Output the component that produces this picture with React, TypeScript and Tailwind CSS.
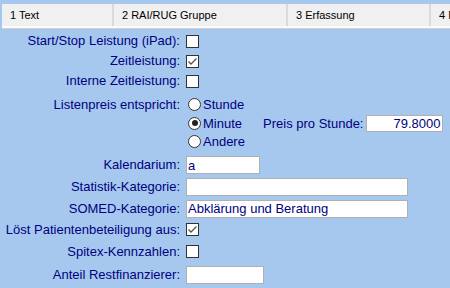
import React from "react";

type RowProps = {
  label?: string;
  h: string;
  children?: React.ReactNode;
};

function Row({ label, h, children }: RowProps) {
  return (
    <div className={`flex items-center ${h}`}>
      <div className="w-[181px] shrink-0 text-right pr-px">{label ? label + ":" : ""}</div>
      <div className="flex items-center pl-[5px]">{children}</div>
    </div>
  );
}

function Check({ checked }: { checked?: boolean }) {
  return (
    <span className="w-[13px] h-[13px] border border-[#333] bg-white flex items-center justify-center">
      {checked && (
        <svg width="11" height="11" viewBox="0 0 11 11">
          <path d="M1.5 5.5 L4 8 L9.5 2.5" fill="none" stroke="#555" strokeWidth="1.3" />
        </svg>
      )}
    </span>
  );
}

function Radio({ label, checked }: { label: string; checked?: boolean }) {
  return (
    <div className="flex items-center h-[17.5px] pl-[4px]">
      <span className="w-[13px] h-[13px] rounded-full border border-[#333] bg-white flex items-center justify-center">
        {checked && <span className="w-[6px] h-[6px] rounded-full bg-[#222]" />}
      </span>
      <span className="ml-[2px]">{label}</span>
    </div>
  );
}

function Field({ w, value, right }: { w: string; value?: string; right?: boolean }) {
  return (
    <div
      className={`${w} h-[18px] bg-white border border-[#b0b0b0] flex items-center px-px leading-none text-[#000080] ${
        right ? "justify-end pr-[3px]" : ""
      }`}
    >
      {value}
    </div>
  );
}

export default function App() {
  const tabs = [
    { label: "1 Text", w: "w-[112px]" },
    { label: "2 RAI/RUG Gruppe", w: "w-[174px]" },
    { label: "3 Erfassung", w: "w-[143px]" },
    { label: "4 Nachweis", w: "w-[60px]" },
  ];

  return (
    <div className="w-[450px] h-[288px] overflow-hidden bg-[#a6c8ee] text-[13px] text-[#000080] font-['Liberation_Sans',Arial,sans-serif]">
      {/* tabs */}
      <div className="pt-1 pl-[2px]">
        <div className="flex h-[22px] bg-[#f0f0f0] overflow-hidden text-[11px] text-black">
          {tabs.map((t) => (
            <div key={t.label} className={`${t.w} shrink-0 flex items-center pl-[8px] border-r-2 border-[#dadada] whitespace-nowrap`}>
              {t.label}
            </div>
          ))}
        </div>
        <div className="h-[2px] bg-[#fbfbfb]" />
        <div className="h-px bg-[#d2d2d2]" />
      </div>

      {/* form */}
      <div className="pt-[1px]">
        <Row label="Start/Stop Leistung (iPad)" h="h-[22px]">
          <Check />
        </Row>
        <Row label="Zeitleistung" h="h-[18px]">
          <Check checked />
        </Row>
        <Row label="Interne Zeitleistung" h="h-[22px]">
          <Check />
        </Row>

        <div className="flex mt-[4px]">
          <div className="w-[181px] shrink-0 text-right pr-px h-[17.5px] flex items-center justify-end">
            Listenpreis entspricht:
          </div>
          <div className="flex flex-col pl-[3px]">
            <Radio label="Stunde" />
            <div className="flex items-center">
              <Radio label="Minute" checked />
              <span className="ml-[21px] mr-[3px]">Preis pro Stunde:</span>
              <div className="w-[77px] h-[17px] bg-white border border-[#b0b0b0] flex items-center justify-end pr-[2px] leading-none">
                79.8000
              </div>
            </div>
            <Radio label="Andere" />
          </div>
        </div>

        <div className="mt-[3.5px]" />
        <Row label="Kalendarium" h="h-[22px]">
          <Field w="w-[74px]" value="a" />
        </Row>
        <Row label="Statistik-Kategorie" h="h-[21px]">
          <Field w="w-[222px]" />
        </Row>
        <Row label="SOMED-Kategorie" h="h-[23px]">
          <Field w="w-[222px]" value="Abklärung und Beratung" />
        </Row>
        <Row label="Löst Patientenbeteiligung aus" h="h-[19px]">
          <Check checked />
        </Row>
        <Row label="Spitex-Kennzahlen" h="h-[25px]">
          <Check />
        </Row>
        <Row label="Anteil Restfinanzierer" h="h-[22px]">
          <Field w="w-[78px]" />
        </Row>
      </div>
    </div>
  );
}
